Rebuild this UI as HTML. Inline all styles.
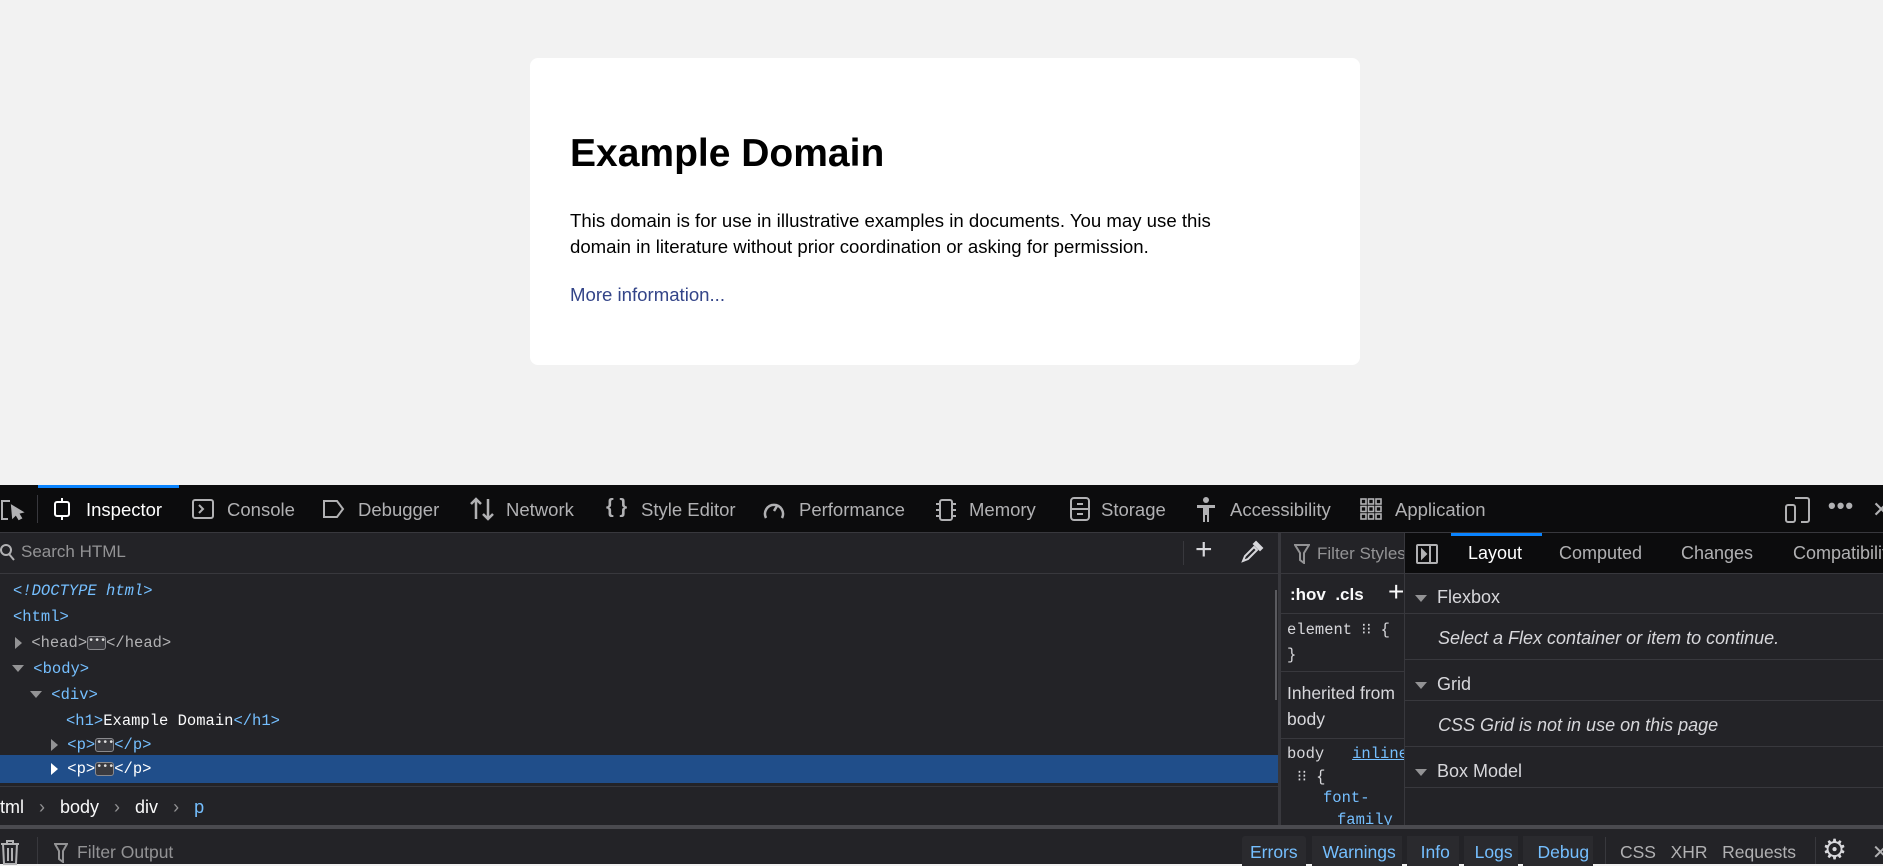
<!DOCTYPE html>
<html><head><meta charset="utf-8"><style>
*{box-sizing:border-box;margin:0;padding:0}
body{width:1883px;height:864px;overflow:hidden;background:#f2f2f2;font-family:"Liberation Sans",sans-serif;position:relative}
.a{position:absolute;white-space:nowrap}
.card{position:absolute;left:530px;top:58px;width:830px;height:307px;background:#fff;border-radius:8px}
.dt{position:absolute;left:0;top:485px;width:1883px;height:379px;background:#232327;color:#b1b1b3;font-size:18px}
.tb{position:absolute;left:0;top:0;width:1883px;height:48px;background:#0c0c0d;border-bottom:1px solid #38383d}
.tab{position:absolute;top:14px;font-size:18.5px;color:#b1b1b3}
.mono{font-family:"Liberation Mono",monospace;font-size:15.5px}
.tag{color:#75bfff}
.ln{position:absolute;left:0;width:1278px;height:26px;line-height:26px}
.tri{display:inline-block;width:0;height:0;vertical-align:middle}
.tr{border-left:7px solid #939395;border-top:6px solid transparent;border-bottom:6px solid transparent}
.td{border-top:7px solid #939395;border-left:6px solid transparent;border-right:6px solid transparent}
.dots{display:inline-block;width:19px;height:14px;border:1px solid #8a8a8e;border-radius:3px;background:#3a3a3f;color:#ddd;font-size:10px;line-height:10px;text-align:center;vertical-align:middle}
.hsep{position:absolute;height:1px;background:#38383d}
.vsep{position:absolute;width:1px;background:#38383d}
</style></head><body>
<div class="card">
 <div class="a" style="left:40px;top:74px;font-size:39px;font-weight:bold;color:#000">Example Domain</div>
 <div class="a" style="left:40px;top:150px;font-size:18.6px;line-height:26px;color:#000">This domain is for use in illustrative examples in documents. You may use this<br>domain in literature without prior coordination or asking for permission.</div>
 <div class="a" style="left:40px;top:226px;font-size:18.6px;color:#334488">More information...</div>
</div>
<div class="dt">
 <div class="tb">
  <div class="a" style="left:38px;top:0;width:141px;height:3px;background:#0a84ff"></div>
  <svg class="a" style="left:0;top:13px" width="26" height="24" viewBox="0 0 26 24" fill="none" stroke="#b1b1b3" stroke-width="2"><path d="M10 3H2v18h6"/><path d="M12 8l10 6-4 1 3 5-2 1-3-5-3 3z" fill="#b1b1b3"/></svg>
  <div class="a" style="left:37px;top:10px;width:1px;height:28px;background:#38383d"></div>
  <svg class="a" style="left:51px;top:13px" width="22" height="22" viewBox="0 0 22 22" fill="none" stroke="#fff" stroke-width="2"><rect x="4" y="4" width="14" height="14" rx="2"/><path d="M11 0v4M11 18v4"/></svg>
  <div class="tab" style="left:86px;color:#fff">Inspector</div>
  <svg class="a" style="left:192px;top:14px" width="22" height="20" viewBox="0 0 22 20" fill="none" stroke="#b1b1b3" stroke-width="2"><rect x="1" y="1" width="20" height="18" rx="2"/><path d="M7 6l4 4-4 4"/></svg>
  <div class="tab" style="left:227px">Console</div>
  <svg class="a" style="left:322px;top:14px" width="24" height="20" viewBox="0 0 24 20" fill="none" stroke="#b1b1b3" stroke-width="2"><path d="M2 2h13l6 8-6 8H2z"/></svg>
  <div class="tab" style="left:358px">Debugger</div>
  <svg class="a" style="left:469px;top:12px" width="26" height="24" viewBox="0 0 26 24" fill="none" stroke="#b1b1b3" stroke-width="2.5"><path d="M7 22V2M2 7l5-5 5 5M19 2v20M14 17l5 5 5-5"/></svg>
  <div class="tab" style="left:506px">Network</div>
  <div class="tab" style="left:606px;font-weight:bold;font-size:20px;top:11px">{ }</div>
  <div class="tab" style="left:641px">Style Editor</div>
  <svg class="a" style="left:762px;top:13px" width="24" height="24" viewBox="0 0 24 24" fill="none" stroke="#b1b1b3" stroke-width="2.5"><path d="M4 20A9 9 0 1 1 20 20"/><path d="M12 13l3-5"/></svg>
  <div class="tab" style="left:799px">Performance</div>
  <svg class="a" style="left:934px;top:13px" width="24" height="24" viewBox="0 0 24 24" fill="none" stroke="#b1b1b3" stroke-width="2"><rect x="6" y="2" width="12" height="20" rx="2"/><path d="M2 6h4M2 12h4M2 18h4M18 6h4M18 12h4M18 18h4"/></svg>
  <div class="tab" style="left:969px">Memory</div>
  <svg class="a" style="left:1070px;top:12px" width="20" height="24" viewBox="0 0 20 24" fill="none" stroke="#b1b1b3" stroke-width="2"><rect x="1" y="1" width="18" height="22" rx="3"/><path d="M1 12h18M7 7h6M7 17h6"/></svg>
  <div class="tab" style="left:1101px">Storage</div>
  <svg class="a" style="left:1196px;top:12px" width="20" height="26" viewBox="0 0 20 26" fill="#b1b1b3"><circle cx="10" cy="3" r="3"/><path d="M1 8h18v3h-6v14h-2v-7h-2v7H7V11H1z"/></svg>
  <div class="tab" style="left:1230px">Accessibility</div>
  <svg class="a" style="left:1360px;top:13px" width="22" height="22" viewBox="0 0 22 22" fill="none" stroke="#b1b1b3" stroke-width="1.6"><rect x="1" y="1" width="5" height="5"/><rect x="8.5" y="1" width="5" height="5"/><rect x="16" y="1" width="5" height="5"/><rect x="1" y="8.5" width="5" height="5"/><rect x="8.5" y="8.5" width="5" height="5"/><rect x="16" y="8.5" width="5" height="5"/><rect x="1" y="16" width="5" height="5"/><rect x="8.5" y="16" width="5" height="5"/><rect x="16" y="16" width="5" height="5"/></svg>
  <div class="tab" style="left:1395px">Application</div>
  <svg class="a" style="left:1785px;top:12px" width="26" height="26" viewBox="0 0 26 26" fill="none" stroke="#b1b1b3" stroke-width="2"><rect x="1" y="8" width="9" height="17" rx="2"/><path d="M10 1h12a2 2 0 0 1 2 2v20a2 2 0 0 1-2 2h-6"/></svg>
  <div class="a" style="left:1828px;top:8px;font-size:22px;font-weight:bold;color:#b1b1b3;letter-spacing:1px">•••</div>
  <div class="a" style="left:1872px;top:12px;font-size:22px;color:#b1b1b3">✕</div>
 </div>
 <div class="hsep" style="left:0;top:88px;width:1278px"></div>
 <svg class="a" style="left:0;top:58px" width="16" height="18" viewBox="0 0 16 18" fill="none" stroke="#b1b1b3" stroke-width="2"><circle cx="6" cy="7" r="5"/><path d="M9 11l5 6"/></svg>
 <div class="a" style="left:21px;top:57px;font-size:17px;color:#939395">Search HTML</div>
 <div class="vsep" style="left:1183px;top:56px;height:24px"></div>
 <div class="a" style="left:1195px;top:48px;font-size:30px;color:#d7d7db;font-weight:300">+</div>
 <svg class="a" style="left:1240px;top:55px" width="24" height="24" viewBox="0 0 24 24" fill="none" stroke="#d7d7db" stroke-width="2"><path d="M3 21l2-5 9-9 3 3-9 9z"/><path d="M15 4l5 5M16 2l6 6-2 2-6-6z" fill="#d7d7db"/></svg>
 <div class="ln mono" style="top:93px;padding-left:13px;color:#75bfff;font-style:italic">&lt;!DOCTYPE html&gt;</div>
 <div class="ln mono tag" style="top:119px;padding-left:13px">&lt;html&gt;</div>
 <div class="ln mono" style="top:145px;padding-left:15px"><span class="tri tr"></span> <span style="color:#b1b1b3">&lt;head&gt;</span><span class="dots">•••</span><span style="color:#b1b1b3">&lt;/head&gt;</span></div>
 <div class="ln mono tag" style="top:171px;padding-left:12px"><span class="tri td"></span> &lt;body&gt;</div>
 <div class="ln mono tag" style="top:197px;padding-left:30px"><span class="tri td"></span> &lt;div&gt;</div>
 <div class="ln mono" style="top:223px;padding-left:66px"><span class="tag">&lt;h1&gt;</span><span style="color:#f9f9fa">Example Domain</span><span class="tag">&lt;/h1&gt;</span></div>
 <div class="ln mono tag" style="top:247px;padding-left:51px"><span class="tri tr"></span> &lt;p&gt;<span class="dots">•••</span>&lt;/p&gt;</div>
 <div class="ln mono" style="top:270px;height:28px;line-height:28px;background:#204e8a;padding-left:51px;color:#fff"><span class="tri tr" style="border-left-color:#fff"></span> &lt;p&gt;<span class="dots">•••</span>&lt;/p&gt;</div>
 <div class="hsep" style="left:0;top:301px;width:1278px"></div>
 <div class="a" style="left:0;top:312px;font-size:18px;color:#f9f9fa">tml <span style="color:#939395;padding:0 10px">›</span> body <span style="color:#939395;padding:0 10px">›</span> div <span style="color:#939395;padding:0 10px">›</span> <span style="color:#75bfff">p</span></div>
 <div class="vsep" style="left:1278px;top:48px;height:292px;background:#38383d;width:3px"></div>
 <div class="a" style="left:1281px;top:48px;width:123px;height:292px;background:#232327;overflow:hidden">
  <svg class="a" style="left:13px;top:11px" width="16" height="20" viewBox="0 0 16 20" fill="none" stroke="#939395" stroke-width="2"><path d="M1 1h14l-5 8v10l-4-3V9z"/></svg>
  <div class="a" style="left:36px;top:11px;font-size:17px;color:#939395">Filter Styles</div>
  <div class="hsep" style="left:0;top:40px;width:123px"></div>
  <div class="a" style="left:9px;top:52px;font-size:17px;color:#f9f9fa;font-weight:bold">:hov &nbsp;.cls</div>
  <div class="a" style="left:107px;top:43px;font-size:28px;color:#f9f9fa">+</div>
  <div class="hsep" style="left:0;top:80px;width:123px"></div>
  <div class="a mono" style="left:6px;top:87px;color:#d7d7db">element ⁝⁝ {</div>
  <div class="a mono" style="left:6px;top:113px;color:#d7d7db">}</div>
  <div class="hsep" style="left:0;top:138px;width:123px"></div>
  <div class="a" style="left:6px;top:147px;font-size:17.5px;color:#d7d7db;line-height:26px">Inherited from<br>body</div>
  <div class="hsep" style="left:0;top:205px;width:123px"></div>
  <div class="a mono" style="left:6px;top:212px;color:#d7d7db">body &nbsp;&nbsp;<span style="color:#75bfff;text-decoration:underline">inline</span></div>
  <div class="a mono" style="left:16px;top:234px;color:#d7d7db">⁝⁝ {</div>
  <div class="a mono" style="left:42px;top:256px;color:#75bfff">font-</div>
  <div class="a mono" style="left:56px;top:278px;color:#75bfff">family</div>
 </div>
 <div class="a" style="left:1275px;top:105px;width:2px;height:110px;background:#5a5a5f"></div>
 <div class="vsep" style="left:1404px;top:48px;height:292px"></div>
 <div class="a" style="left:1405px;top:48px;width:478px;height:40px;background:#0c0c0d"></div>
 <div class="a" style="left:1451px;top:48px;width:91px;height:3px;background:#0a84ff"></div>
 <svg class="a" style="left:1416px;top:59px" width="22" height="20" viewBox="0 0 22 20" fill="none" stroke="#b1b1b3" stroke-width="2"><rect x="1" y="1" width="20" height="18" rx="1"/><path d="M14 1v18"/><path d="M6 6l4 4-4 4z" fill="#b1b1b3"/></svg>
 <div class="a" style="left:1468px;top:58px;font-size:18px;color:#fff">Layout</div>
 <div class="a" style="left:1559px;top:58px;font-size:18px;color:#b1b1b3">Computed</div>
 <div class="a" style="left:1681px;top:58px;font-size:18px;color:#b1b1b3">Changes</div>
 <div class="a" style="left:1793px;top:58px;font-size:18px;color:#b1b1b3">Compatibility</div>
 <div class="hsep" style="left:1404px;top:88px;width:479px"></div>
 <div class="a" style="left:1415px;top:102px;font-size:18px;color:#d7d7db"><span class="tri td"></span>&nbsp; Flexbox</div>
 <div class="hsep" style="left:1404px;top:128px;width:479px"></div>
 <div class="a" style="left:1438px;top:143px;font-size:18px;color:#d7d7db;font-style:italic">Select a Flex container or item to continue.</div>
 <div class="hsep" style="left:1404px;top:174px;width:479px"></div>
 <div class="a" style="left:1415px;top:189px;font-size:18px;color:#d7d7db"><span class="tri td"></span>&nbsp; Grid</div>
 <div class="hsep" style="left:1404px;top:215px;width:479px"></div>
 <div class="a" style="left:1438px;top:230px;font-size:18px;color:#d7d7db;font-style:italic">CSS Grid is not in use on this page</div>
 <div class="hsep" style="left:1404px;top:261px;width:479px"></div>
 <div class="a" style="left:1415px;top:276px;font-size:18px;color:#d7d7db"><span class="tri td"></span>&nbsp; Box Model</div>
 <div class="hsep" style="left:1404px;top:302px;width:479px"></div>
 <div class="a" style="left:0;top:340px;width:1883px;height:4px;background:#4a4a4f"></div>
 <svg class="a" style="left:0;top:354px" width="20" height="26" viewBox="0 0 20 26" fill="none" stroke="#b1b1b3" stroke-width="2"><path d="M1 5h18M7 5V2h6v3M3 5l1 20h12l1-20M8 9v13M12 9v13"/></svg>
 <div class="vsep" style="left:37px;top:352px;height:27px"></div>
 <svg class="a" style="left:54px;top:358px" width="14" height="20" viewBox="0 0 14 20" fill="none" stroke="#939395" stroke-width="2"><path d="M1 1h12l-4 7v11l-4-3V8z"/></svg>
 <div class="a" style="left:77px;top:357px;font-size:17.5px;color:#939395">Filter Output</div>
 <div class="a" style="left:1242px;top:351px;width:64px;height:30px;background:#2a2a2e;border-radius:3px 3px 0 0"></div>
 <div class="a" style="left:1312px;top:351px;width:90px;height:30px;background:#2a2a2e"></div>
 <div class="a" style="left:1407px;top:351px;width:52px;height:30px;background:#2a2a2e"></div>
 <div class="a" style="left:1464px;top:351px;width:54px;height:30px;background:#2a2a2e"></div>
 <div class="a" style="left:1523px;top:351px;width:70px;height:30px;background:#2a2a2e"></div>
 <div class="a" style="left:1250px;top:357px;font-size:17.5px;color:#75bfff;word-spacing:20px">Errors Warnings Info Logs Debug</div>
 <div class="vsep" style="left:1605px;top:352px;height:27px"></div>
 <div class="a" style="left:1620px;top:357px;font-size:17.5px;color:#b1b1b3">CSS &nbsp;&nbsp;XHR &nbsp;&nbsp;Requests</div>
 <div class="vsep" style="left:1815px;top:352px;height:27px"></div>
 <div class="a" style="left:1822px;top:348px;font-size:28px;color:#d7d7db">⚙</div>
 <div class="a" style="left:1872px;top:355px;font-size:20px;color:#b1b1b3">✕</div>
</div>
</body></html>
